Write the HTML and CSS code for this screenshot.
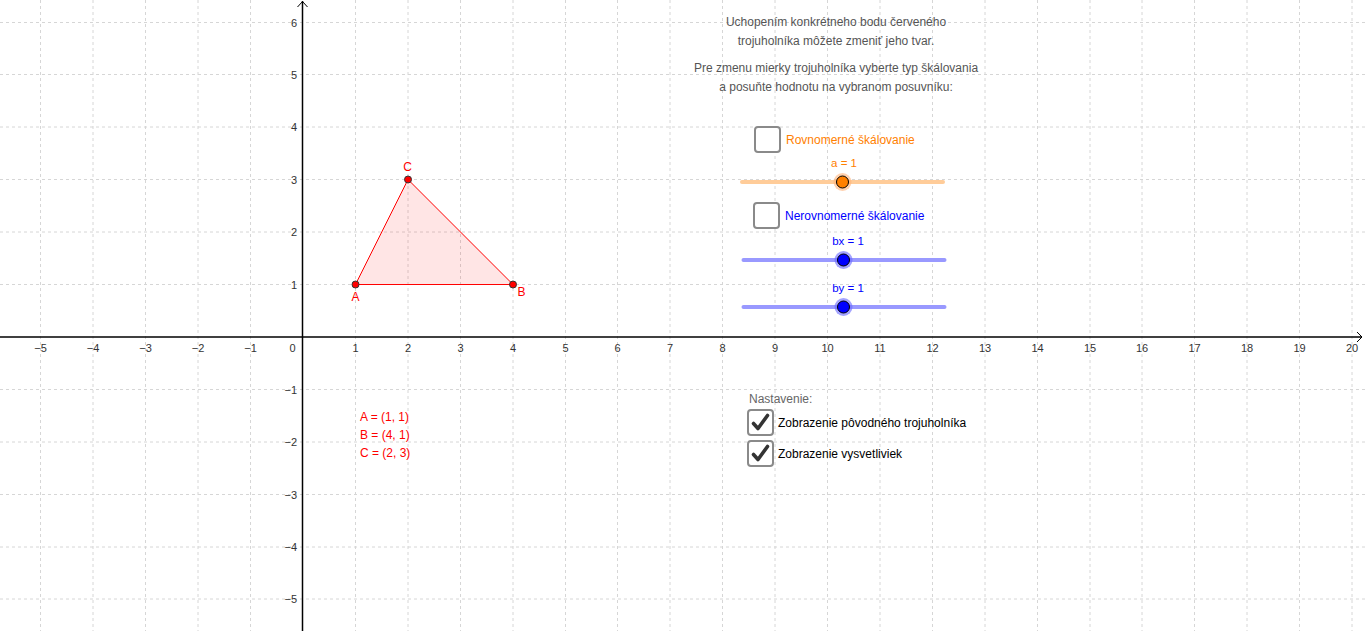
FILE: index.html
```html
<!DOCTYPE html>
<html lang="sk">
<head>
<meta charset="utf-8">
<title>Škálovanie trojuholníka</title>
<link rel="stylesheet" href="styles.css">
</head>
<body>
<div class="applet">
  <svg class="graph" width="1366" height="631" viewBox="0 0 1366 631" xmlns="http://www.w3.org/2000/svg">
    <g class="grid">
      <line x1="40.5" y1="0" x2="40.5" y2="631"/>
      <line x1="93" y1="0" x2="93" y2="631"/>
      <line x1="145.5" y1="0" x2="145.5" y2="631"/>
      <line x1="198" y1="0" x2="198" y2="631"/>
      <line x1="250.5" y1="0" x2="250.5" y2="631"/>
      <line x1="355.5" y1="0" x2="355.5" y2="631"/>
      <line x1="408" y1="0" x2="408" y2="631"/>
      <line x1="460.5" y1="0" x2="460.5" y2="631"/>
      <line x1="513" y1="0" x2="513" y2="631"/>
      <line x1="565.5" y1="0" x2="565.5" y2="631"/>
      <line x1="617.5" y1="0" x2="617.5" y2="631"/>
      <line x1="670" y1="0" x2="670" y2="631"/>
      <line x1="722.5" y1="0" x2="722.5" y2="631"/>
      <line x1="775" y1="0" x2="775" y2="631"/>
      <line x1="827.5" y1="0" x2="827.5" y2="631"/>
      <line x1="880" y1="0" x2="880" y2="631"/>
      <line x1="932.5" y1="0" x2="932.5" y2="631"/>
      <line x1="985" y1="0" x2="985" y2="631"/>
      <line x1="1037.5" y1="0" x2="1037.5" y2="631"/>
      <line x1="1090" y1="0" x2="1090" y2="631"/>
      <line x1="1142" y1="0" x2="1142" y2="631"/>
      <line x1="1194.5" y1="0" x2="1194.5" y2="631"/>
      <line x1="1247" y1="0" x2="1247" y2="631"/>
      <line x1="1299.5" y1="0" x2="1299.5" y2="631"/>
      <line x1="1352" y1="0" x2="1352" y2="631"/>
      <line x1="0" y1="22.5" x2="1366" y2="22.5"/>
      <line x1="0" y1="74.5" x2="1366" y2="74.5"/>
      <line x1="0" y1="127" x2="1366" y2="127"/>
      <line x1="0" y1="179.5" x2="1366" y2="179.5"/>
      <line x1="0" y1="232" x2="1366" y2="232"/>
      <line x1="0" y1="284.5" x2="1366" y2="284.5"/>
      <line x1="0" y1="389.5" x2="1366" y2="389.5"/>
      <line x1="0" y1="442" x2="1366" y2="442"/>
      <line x1="0" y1="494.5" x2="1366" y2="494.5"/>
      <line x1="0" y1="547" x2="1366" y2="547"/>
      <line x1="0" y1="599" x2="1366" y2="599"/>
    </g>
    <g class="axes">
      <line x1="0" y1="337" x2="1362" y2="337"/>
      <line x1="302.5" y1="631" x2="302.5" y2="1"/>
      <polyline class="arrow" points="1357,332 1362,337 1357,342"/>
      <polyline class="arrow" points="297.5,7 302.5,1.5 307.5,7"/>
    </g>
    <g class="xlabels">
      <text x="40.5" y="352">−5</text>
      <text x="93" y="352">−4</text>
      <text x="145.5" y="352">−3</text>
      <text x="198" y="352">−2</text>
      <text x="250.5" y="352">−1</text>
      <text x="292.5" y="352">0</text>
      <text x="355.5" y="352">1</text>
      <text x="408" y="352">2</text>
      <text x="460.5" y="352">3</text>
      <text x="513" y="352">4</text>
      <text x="565.5" y="352">5</text>
      <text x="617.5" y="352">6</text>
      <text x="670" y="352">7</text>
      <text x="722.5" y="352">8</text>
      <text x="775" y="352">9</text>
      <text x="827.5" y="352">10</text>
      <text x="880" y="352">11</text>
      <text x="932.5" y="352">12</text>
      <text x="985" y="352">13</text>
      <text x="1037.5" y="352">14</text>
      <text x="1090" y="352">15</text>
      <text x="1142" y="352">16</text>
      <text x="1194.5" y="352">17</text>
      <text x="1247" y="352">18</text>
      <text x="1299.5" y="352">19</text>
      <text x="1352" y="352">20</text>
    </g>
    <g class="ylabels">
      <text x="297" y="26.5">6</text>
      <text x="297" y="78.5">5</text>
      <text x="297" y="131">4</text>
      <text x="297" y="183.5">3</text>
      <text x="297" y="236">2</text>
      <text x="297" y="288.5">1</text>
      <text x="297" y="393.5">−1</text>
      <text x="297" y="446">−2</text>
      <text x="297" y="498.5">−3</text>
      <text x="297" y="551">−4</text>
      <text x="297" y="603">−5</text>
    </g>
    <g class="triangle">
      <polygon points="355.5,284.5 513,284.5 408,179.5"/>
      <circle cx="355.5" cy="284.5" r="3.5"/>
      <circle cx="513" cy="284.5" r="3.5"/>
      <circle cx="408" cy="179.5" r="3.5"/>
      <text x="355.5" y="301">A</text>
      <text x="521.5" y="296">B</text>
      <text x="407.5" y="171">C</text>
    </g>
    <g class="slider slider-a">
      <line class="track" x1="742" y1="182" x2="943" y2="182"/>
      <circle class="halo" cx="842.5" cy="182" r="9"/>
      <circle class="knob" cx="842.5" cy="182" r="6"/>
      <text x="844" y="167">a = 1</text>
    </g>
    <g class="slider slider-b">
      <line class="track" x1="743.5" y1="260" x2="944.5" y2="260"/>
      <circle class="halo" cx="843.5" cy="260" r="9"/>
      <circle class="knob" cx="843.5" cy="260" r="6"/>
      <text x="848" y="245">bx = 1</text>
    </g>
    <g class="slider slider-b">
      <line class="track" x1="743.5" y1="307" x2="944.5" y2="307"/>
      <circle class="halo" cx="843.5" cy="307" r="9"/>
      <circle class="knob" cx="843.5" cy="307" r="6"/>
      <text x="848" y="292">by = 1</text>
    </g>
  </svg>

  <div class="info">
    <p>Uchopením konkrétneho bodu červeného<br>trojuholníka môžete zmeniť jeho tvar.</p>
    <p>Pre zmenu mierky trojuholníka vyberte typ škálovania<br>a posuňte hodnotu na vybranom posuvníku:</p>
  </div>

  <div class="check check-uniform">
    <span class="box"></span>
    <span class="label orange">Rovnomerné škálovanie</span>
  </div>

  <div class="check check-nonuniform">
    <span class="box"></span>
    <span class="label blue">Nerovnomerné škálovanie</span>
  </div>

  <div class="settings">
    <div class="settings-title">Nastavenie:</div>
    <div class="check-row">
      <span class="box checked">
        <svg width="27" height="27" viewBox="0 0 27 27"><path d="M6.5 14.5 L11 19.5 L20.5 6.5"/></svg>
      </span>
      <span class="label">Zobrazenie pôvodného trojuholníka</span>
    </div>
    <div class="check-row">
      <span class="box checked">
        <svg width="27" height="27" viewBox="0 0 27 27"><path d="M6.5 14.5 L11 19.5 L20.5 6.5"/></svg>
      </span>
      <span class="label">Zobrazenie vysvetliviek</span>
    </div>
  </div>

  <div class="coords">
    <div>A = (1, 1)</div>
    <div>B = (4, 1)</div>
    <div>C = (2, 3)</div>
  </div>
</div>
</body>
</html>
```

FILE: styles.css
```css
html, body {
  margin: 0;
  padding: 0;
  background: #ffffff;
  overflow: hidden;
}

.applet {
  position: relative;
  width: 1366px;
  height: 631px;
  font-family: "Liberation Sans", Arial, sans-serif;
  background: #ffffff;
  overflow: hidden;
}

.graph {
  display: block;
}

.grid line {
  stroke: #d6d6d6;
  stroke-width: 1;
  stroke-dasharray: 3 3;
}

.axes line {
  stroke: #000000;
  stroke-width: 1.5;
}

.axes .arrow {
  fill: none;
  stroke: #000000;
  stroke-width: 1;
}

.xlabels text,
.ylabels text {
  font-family: "Liberation Sans", Arial, sans-serif;
  font-size: 11px;
  fill: #333333;
}

.xlabels text {
  text-anchor: middle;
}

.ylabels text {
  text-anchor: end;
}

.triangle polygon {
  fill: rgba(255, 0, 0, 0.1);
  stroke: #ff0000;
  stroke-width: 1;
}

.triangle circle {
  fill: #ff0000;
  stroke: #333333;
  stroke-width: 1;
}

.triangle text {
  font-family: "Liberation Sans", Arial, sans-serif;
  font-size: 12px;
  fill: #ff0000;
  text-anchor: middle;
}

.slider .track {
  stroke-width: 4;
  stroke-linecap: round;
}

.slider .knob {
  stroke: #000000;
  stroke-width: 1;
}

.slider text {
  font-family: "Liberation Sans", Arial, sans-serif;
  font-size: 11.5px;
  text-anchor: middle;
}

.slider-a .track { stroke: #ffcc99; }
.slider-a .halo { fill: #ffb37a; opacity: 0.6; }
.slider-a .knob { fill: #ff8000; }
.slider-a text { fill: #ff8000; }

.slider-b .track { stroke: #9999ff; }
.slider-b .halo { fill: #6666ff; opacity: 0.6; }
.slider-b .knob { fill: #0000ff; }
.slider-b text { fill: #0000ff; }

.info {
  position: absolute;
  left: 636px;
  top: 13px;
  width: 400px;
  text-align: center;
  font-size: 12px;
  line-height: 19px;
  color: #555555;
}

.info p {
  margin: 0 0 8px 0;
}

.box {
  display: inline-block;
  box-sizing: border-box;
  width: 27px;
  height: 27px;
  border: 2px solid #8a8a8a;
  border-radius: 4px;
  background: #ffffff;
  flex: none;
}

.box svg {
  display: block;
  margin: -2px;
}

.box svg path {
  fill: none;
  stroke: #333333;
  stroke-width: 3.6;
  stroke-linecap: round;
  stroke-linejoin: round;
}

.check {
  position: absolute;
  display: flex;
  align-items: center;
  gap: 5px;
  font-size: 12px;
}

.check-uniform {
  left: 754px;
  top: 126px;
}

.check-nonuniform {
  left: 753px;
  top: 202px;
}

.check .label {
  margin-top: 1px;
}

.orange { color: #ff8000; }
.blue { color: #0000ff; }

.settings {
  position: absolute;
  left: 747px;
  top: 391px;
  font-size: 12px;
}

.settings-title {
  color: #666666;
  margin-left: 2px;
  line-height: 16px;
  margin-bottom: 2px;
}

.check-row {
  display: flex;
  align-items: center;
  gap: 4px;
  margin-bottom: 4px;
  color: #000000;
}

.coords {
  position: absolute;
  left: 360px;
  top: 408px;
  font-size: 12px;
  line-height: 18px;
  color: #ff0000;
}
```
